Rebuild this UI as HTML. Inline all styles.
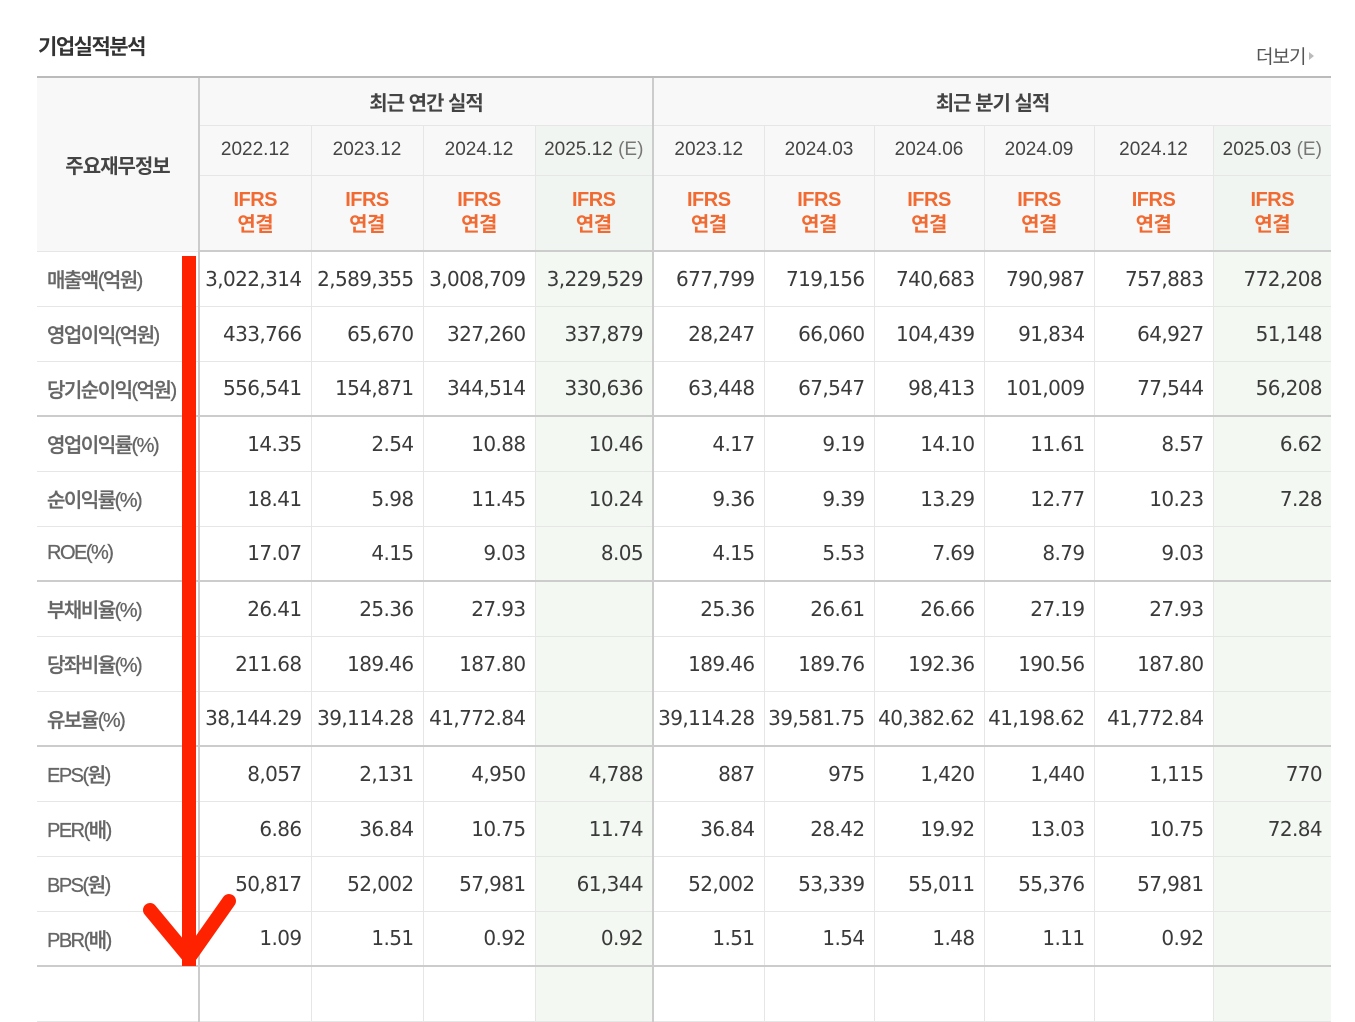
<!DOCTYPE html>
<html><head><meta charset="utf-8"><style>
*{margin:0;padding:0;box-sizing:border-box}
body{width:1355px;height:981px;background:#fff;position:relative;overflow:hidden;font-family:"Liberation Sans","Noto Sans CJK KR",sans-serif}
.t{position:absolute;left:38px;top:31px;font-size:21px;font-weight:bold;color:#333;letter-spacing:-1.5px}
.more{position:absolute;left:1256px;top:42px;font-size:19px;color:#555;letter-spacing:-1px}
.more:after{content:"";display:inline-block;border-left:5px solid #bbb;border-top:4px solid transparent;border-bottom:4px solid transparent;margin-left:4px;vertical-align:3px}
table{position:absolute;left:37px;top:76px;border-collapse:collapse;table-layout:fixed;width:1294px}
td,th{border:1px solid #e6e6e6;font-weight:normal;white-space:nowrap;overflow:hidden}
tr td:first-child,tr th.lab{border-left:none}
tr td:last-child,tr th:last-child{border-right:none}
th{background:#f8f8f8;color:#333;font-size:20px}
tr.h1 th{height:48px;font-weight:bold;color:#444;letter-spacing:-1px}
tr.h2 th{height:50px;color:#444;font-size:19px}
tr.h3 th{height:76px;color:#f06a32;font-weight:bold;font-size:20px;line-height:25px;letter-spacing:-0.5px}
th.lab{font-weight:bold;color:#555;letter-spacing:-1.5px}
td{height:55px;text-align:right;padding-right:9px;color:#3a3a3a;font-family:"DejaVu Sans","Noto Sans CJK KR",sans-serif;font-size:20px;letter-spacing:-0.6px}
td.l{text-align:left;padding-left:10px;color:#666;font-family:"Liberation Sans","Noto Sans CJK KR",sans-serif;font-size:20px;letter-spacing:-1.5px;font-weight:500;-webkit-text-stroke:0.3px #666}
.g{background:#f3f8f3}
th.g{background:#f1f5f1}
table tr:first-child th{border-top:2px solid #bbb}
tr.h3 th,tr.sep td{border-bottom:2px solid #ccc}
.v{border-left:2px solid #ccc}
</style></head><body>
<div class="t">기업실적분석</div>
<div class="more">더보기</div>
<table>
<colgroup><col style="width:162px"><col style="width:112px"><col style="width:112px"><col style="width:112px"><col style="width:118px"><col style="width:111px"><col style="width:110px"><col style="width:110px"><col style="width:110px"><col style="width:119px"><col style="width:118px"></colgroup>
<tr class="h1"><th rowspan="3" class="lab">주요재무정보</th><th colspan="4" class="v">최근 연간 실적</th><th colspan="6" class="v">최근 분기 실적</th></tr>
<tr class="h2"><th class="v">2022.12</th><th>2023.12</th><th>2024.12</th><th class="g">2025.12 <span style="color:#777">(E)</span></th><th class="v">2023.12</th><th>2024.03</th><th>2024.06</th><th>2024.09</th><th>2024.12</th><th class="g">2025.03 <span style="color:#777">(E)</span></th></tr>
<tr class="h3"><th class="v">IFRS<br>연결</th><th>IFRS<br>연결</th><th>IFRS<br>연결</th><th class="g">IFRS<br>연결</th><th class="v">IFRS<br>연결</th><th>IFRS<br>연결</th><th>IFRS<br>연결</th><th>IFRS<br>연결</th><th>IFRS<br>연결</th><th class="g">IFRS<br>연결</th></tr>
<tr><td class="l">매출액(억원)</td><td class="v">3,022,314</td><td>2,589,355</td><td>3,008,709</td><td class="g">3,229,529</td><td class="v">677,799</td><td>719,156</td><td>740,683</td><td>790,987</td><td>757,883</td><td class="g">772,208</td></tr>
<tr><td class="l">영업이익(억원)</td><td class="v">433,766</td><td>65,670</td><td>327,260</td><td class="g">337,879</td><td class="v">28,247</td><td>66,060</td><td>104,439</td><td>91,834</td><td>64,927</td><td class="g">51,148</td></tr>
<tr class="sep"><td class="l">당기순이익(억원)</td><td class="v">556,541</td><td>154,871</td><td>344,514</td><td class="g">330,636</td><td class="v">63,448</td><td>67,547</td><td>98,413</td><td>101,009</td><td>77,544</td><td class="g">56,208</td></tr>
<tr><td class="l">영업이익률(%)</td><td class="v">14.35</td><td>2.54</td><td>10.88</td><td class="g">10.46</td><td class="v">4.17</td><td>9.19</td><td>14.10</td><td>11.61</td><td>8.57</td><td class="g">6.62</td></tr>
<tr><td class="l">순이익률(%)</td><td class="v">18.41</td><td>5.98</td><td>11.45</td><td class="g">10.24</td><td class="v">9.36</td><td>9.39</td><td>13.29</td><td>12.77</td><td>10.23</td><td class="g">7.28</td></tr>
<tr class="sep"><td class="l">ROE(%)</td><td class="v">17.07</td><td>4.15</td><td>9.03</td><td class="g">8.05</td><td class="v">4.15</td><td>5.53</td><td>7.69</td><td>8.79</td><td>9.03</td><td class="g"></td></tr>
<tr><td class="l">부채비율(%)</td><td class="v">26.41</td><td>25.36</td><td>27.93</td><td class="g"></td><td class="v">25.36</td><td>26.61</td><td>26.66</td><td>27.19</td><td>27.93</td><td class="g"></td></tr>
<tr><td class="l">당좌비율(%)</td><td class="v">211.68</td><td>189.46</td><td>187.80</td><td class="g"></td><td class="v">189.46</td><td>189.76</td><td>192.36</td><td>190.56</td><td>187.80</td><td class="g"></td></tr>
<tr class="sep"><td class="l">유보율(%)</td><td class="v">38,144.29</td><td>39,114.28</td><td>41,772.84</td><td class="g"></td><td class="v">39,114.28</td><td>39,581.75</td><td>40,382.62</td><td>41,198.62</td><td>41,772.84</td><td class="g"></td></tr>
<tr><td class="l">EPS(원)</td><td class="v">8,057</td><td>2,131</td><td>4,950</td><td class="g">4,788</td><td class="v">887</td><td>975</td><td>1,420</td><td>1,440</td><td>1,115</td><td class="g">770</td></tr>
<tr><td class="l">PER(배)</td><td class="v">6.86</td><td>36.84</td><td>10.75</td><td class="g">11.74</td><td class="v">36.84</td><td>28.42</td><td>19.92</td><td>13.03</td><td>10.75</td><td class="g">72.84</td></tr>
<tr><td class="l">BPS(원)</td><td class="v">50,817</td><td>52,002</td><td>57,981</td><td class="g">61,344</td><td class="v">52,002</td><td>53,339</td><td>55,011</td><td>55,376</td><td>57,981</td><td class="g"></td></tr>
<tr class="sep"><td class="l">PBR(배)</td><td class="v">1.09</td><td>1.51</td><td>0.92</td><td class="g">0.92</td><td class="v">1.51</td><td>1.54</td><td>1.48</td><td>1.11</td><td>0.92</td><td class="g"></td></tr>
<tr><td class="l"></td><td class="v"></td><td></td><td></td><td class="g"></td><td class="v"></td><td></td><td></td><td></td><td></td><td class="g"></td></tr>
</table>
<svg style="position:absolute;left:0;top:0" width="1355" height="981">
<rect x="182" y="256" width="14" height="710" fill="#ff2200"/>
<path d="M150 910 L189 957 M229 901 L191 955" stroke="#ff2200" stroke-width="14" stroke-linecap="round" fill="none"/>
</svg>
</body></html>
